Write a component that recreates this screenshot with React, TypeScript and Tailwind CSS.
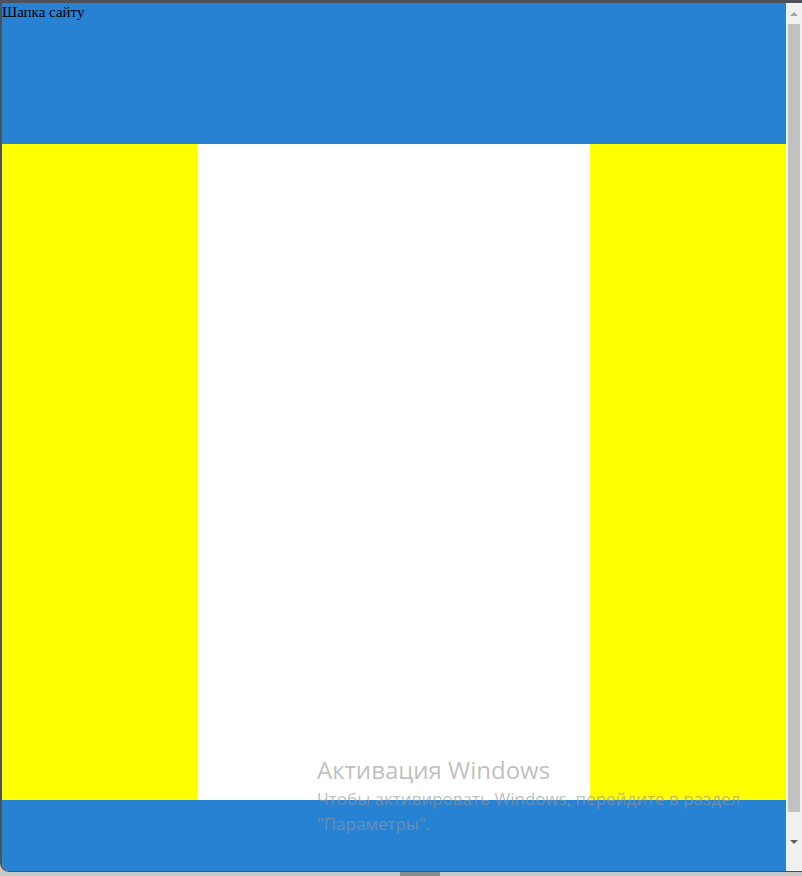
export default function App() {
  return (
    <div className="relative flex h-[876px] w-[802px] flex-col overflow-hidden bg-[#c9c9c9]">
      <div className="h-[3px] shrink-0 bg-[#4b5259]" />
      <div className="flex h-[869px] shrink-0">
        <div className="flex flex-1 flex-col overflow-hidden rounded-bl-[9px] border-b border-l-2 border-[#4b5259]">
          <header className="h-[141px] shrink-0 bg-[#2882d3] font-['Liberation_Serif',serif] text-[15px] leading-[18px] text-black">
            Шапка сайту
          </header>
          <main className="flex h-[656px] shrink-0">
            <aside className="w-[196px] bg-[#ffff00]" />
            <section className="flex-1 bg-white" />
            <aside className="w-[196px] bg-[#ffff00]" />
          </main>
          <footer className="flex-1 bg-[#2882d3]" />
        </div>
        <div className="flex w-[16px] shrink-0 flex-col items-center border-b border-[#4b5259] bg-[#f0f0f0]">
          <div className="flex h-[21px] items-center justify-center">
            <div className="h-0 w-0 border-x-[4px] border-b-[4px] border-x-transparent border-b-[#a3a3a3]" />
          </div>
          <div className="h-[788px] w-[12px] bg-[#c1c1c1]" />
          <div className="flex flex-1 items-center justify-center">
            <div className="h-0 w-0 border-x-[4px] border-t-[4px] border-x-transparent border-t-[#606060]" />
          </div>
        </div>
      </div>
      <div className="flex h-[4px] shrink-0 pl-[400px]">
        <div className="h-full w-[40px] bg-[#8a8a8a]" />
      </div>
      <div className="pointer-events-none absolute left-[317px] top-[754px] font-['Open_Sans','Noto_Sans',sans-serif] text-[rgba(150,150,150,0.62)]">
        <div className="text-[24px] leading-[31px]">Активация Windows</div>
        <div className="mt-[1px] text-[17px] leading-[25px]">
          Чтобы активировать Windows, перейдите в раздел
          <br />
          "Параметры".
        </div>
      </div>
    </div>
  );
}
